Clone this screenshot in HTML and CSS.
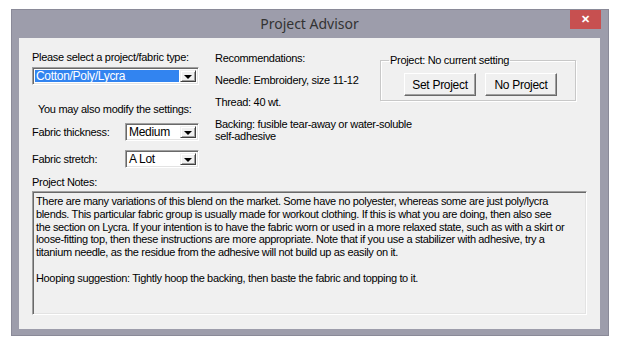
FILE: index.html
```html
<!DOCTYPE html>
<html lang="en">
<head>
    <meta charset="UTF-8">
    <title>Project Advisor</title>
    <link rel="stylesheet" href="styles.css">
</head>
<body>

<div class="window">
    <!-- Title bar -->
    <div class="titlebar">
        <span class="title">Project Advisor</span>
        <div class="close">&#x2715;</div>
    </div>

    <div class="client">
        <div class="top">
            <!-- Left column: project type and settings -->
            <div class="settings">
                <div class="line">Please select a project/fabric type:</div>
                <div class="combo wide">
                    <span class="value selected">Cotton/Poly/Lycra</span>
                    <span class="arrow"></span>
                </div>
                <div class="line hint">You may also modify the settings:</div>
                <div class="row">
                    <span class="row-label">Fabric thickness:</span>
                    <div class="combo small">
                        <span class="value">Medium</span>
                        <span class="arrow"></span>
                    </div>
                </div>
                <div class="row">
                    <span class="row-label">Fabric stretch:</span>
                    <div class="combo small">
                        <span class="value">A Lot</span>
                        <span class="arrow"></span>
                    </div>
                </div>
            </div>

            <!-- Middle column: recommendations -->
            <div class="recs">
                <p>Recommendations:</p>
                <p>Needle: Embroidery, size 11-12</p>
                <p>Thread: 40 wt.</p>
                <p>Backing: fusible tear-away or water-soluble<br>self-adhesive</p>
            </div>

            <!-- Project group -->
            <fieldset class="group">
                <legend>Project: No current setting</legend>
                <button class="btn">Set Project</button>
                <button class="btn">No Project</button>
            </fieldset>
        </div>

        <div class="line notes-label">Project Notes:</div>
        <div class="notes">
            There are many variations of this blend on the market. Some have no polyester, whereas some are just poly/lycra<br>
            blends. This particular fabric group is usually made for workout clothing. If this is what you are doing, then also see<br>
            the section on Lycra. If your intention is to have the fabric worn or used in a more relaxed state, such as with a skirt or<br>
            loose-fitting top, then these instructions are more appropriate. Note that if you use a stabilizer with adhesive, try a<br>
            titanium needle, as the residue from the adhesive will not build up as easily on it.<br>
            <br>
            Hooping suggestion: Tightly hoop the backing, then baste the fabric and topping to it.
        </div>
    </div>
</div>

</body>
</html>
```

FILE: styles.css
```css
body {
    margin: 0;
    background-color: #fff;
    font-family: "Liberation Sans", Arial, sans-serif;
    font-size: 11px;
    color: #000;
}

.window {
    margin: 9px 0 0 11px;
    width: 598px;
    background-color: #9d9dab;
    padding: 0 8px 6px 7px;
    box-sizing: border-box;
    border: 1px solid #8a8a98;
}

.titlebar {
    position: relative;
    height: 28px;
    display: flex;
    align-items: center;
    justify-content: center;
}
.title {
    font-family: "Noto Sans", "Open Sans", sans-serif;
    font-size: 14px;
    color: #333;
    margin-top: -1px;
}
.close {
    position: absolute;
    right: -1px;
    top: 0;
    width: 31px;
    height: 19px;
    background-color: #c75050;
    color: #fff;
    font-size: 11px;
    font-weight: bold;
    display: flex;
    align-items: center;
    justify-content: center;
}

.client {
    background-color: #f0f0f0;
    height: 291px;
    padding: 13px 15px 0 13px;
    box-sizing: border-box;
}

.line {
    line-height: 13px;
    height: 13px;
    letter-spacing: -0.3px;
    white-space: nowrap;
}

.top {
    display: flex;
    height: 125px;
}

/* left column */
.settings {
    width: 167px;
}
.hint {
    margin: 18px 0 7px 6px;
}
.row {
    display: flex;
    align-items: center;
    margin-bottom: 9px;
}
.row-label {
    width: 93px;
    letter-spacing: -0.3px;
}

.combo {
    display: flex;
    height: 18px;
    box-sizing: border-box;
    background-color: #fff;
    border: 1px solid;
    border-color: #a0a0a0 #fff #fff #a0a0a0;
    box-shadow: inset 1px 1px #696969, inset -1px -1px #e3e3e3;
    padding: 2px 2px 2px 2px;
}
.combo.wide {
    width: 167px;
    margin-top: 3px;
}
.combo.small {
    width: 74px;
}
.value {
    flex: 1;
    line-height: 12px;
    padding-left: 1px;
    letter-spacing: -0.3px;
    font-size: 12px;
}
.value.selected {
    background-color: #3284f0;
    color: #fff;
    margin-right: 1px;
}
.arrow {
    width: 16px;
    box-sizing: border-box;
    background-color: #f0f0f0;
    border: 1px solid;
    border-color: #f0f0f0 #404040 #404040 #f0f0f0;
    box-shadow: inset 1px 1px #fff, inset -1px -1px #a0a0a0;
    position: relative;
}
.arrow::after {
    content: "";
    position: absolute;
    left: 3px;
    top: 4px;
    border-left: 4px solid transparent;
    border-right: 4px solid transparent;
    border-top: 4px solid #000;
}

/* middle column */
.recs {
    margin-left: 16px;
    width: 165px;
}
.recs p {
    margin: 0 0 10px 0;
    line-height: 12px;
    letter-spacing: -0.3px;
    white-space: nowrap;
}
.recs p:first-child {
    margin-top: 1px;
}

/* project group */
.group {
    margin: 3px 0 0 0;
    width: 196px;
    height: 47px;
    box-sizing: border-box;
    border: 1px solid #c8c8c8;
    box-shadow: 1px 1px #fff, inset 1px 1px #fff;
    padding: 7px 0 0 23px;
    display: flex;
    gap: 9px;
    align-items: flex-start;
}
.group legend {
    padding: 0 1px;
    margin-left: -15px;
    line-height: 12px;
    letter-spacing: -0.3px;
    white-space: nowrap;
}

.btn {
    width: 72px;
    height: 23px;
    background-color: #f0f0f0;
    font-family: "Liberation Sans", Arial, sans-serif;
    font-size: 12px;
    letter-spacing: -0.3px;
    color: #000;
    border: 1px solid;
    border-color: #fff #696969 #696969 #fff;
    box-shadow: inset -1px -1px #a0a0a0;
    padding: 0;
}

/* notes */
.notes-label {
    margin-top: 0;
    margin-bottom: 2px;
}
.notes {
    width: 555px;
    height: 124px;
    box-sizing: border-box;
    border: 1px solid;
    border-color: #a0a0a0 #fff #fff #a0a0a0;
    box-shadow: inset 1px 1px #696969, inset -1px -1px #e3e3e3;
    padding: 3px 2px 0 3px;
    line-height: 12.8px;
    letter-spacing: -0.35px;
    white-space: nowrap;
    overflow: hidden;
}
```
